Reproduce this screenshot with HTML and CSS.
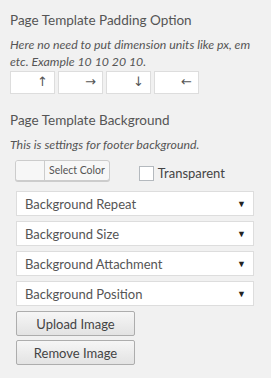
FILE: index.html
```html
<!DOCTYPE html>
<html lang="en">
<head>
    <meta charset="UTF-8">
    <meta name="viewport" content="width=device-width, initial-scale=1.0">
    <title>Page Template Options</title>
    <link rel="stylesheet" href="styles.css">
</head>
<body>
    <div class="options-panel">
        <div class="option-group">
            <h4 class="option-title">Page Template Padding Option</h4>
            <p class="option-desc">Here no need to put dimension units like px, em etc. Example 10 10 20 10.</p>
            <div class="padding-inputs">
                <label class="padding-box"><input type="text"><span class="arrow">&#8593;</span></label>
                <label class="padding-box"><input type="text"><span class="arrow">&#8594;</span></label>
                <label class="padding-box"><input type="text"><span class="arrow">&#8595;</span></label>
                <label class="padding-box"><input type="text"><span class="arrow">&#8592;</span></label>
            </div>
        </div>

        <div class="option-group">
            <h4 class="option-title">Page Template Background</h4>
            <p class="option-desc">This is settings for footer background.</p>
            <div class="bg-fields">
                <div class="color-row">
                    <button class="color-picker" type="button">
                        <span class="color-swatch"></span>
                        <span class="color-label">Select Color</span>
                    </button>
                    <label class="transparent-check">
                        <span class="check-box"></span>
                        Transparent
                    </label>
                </div>
                <div class="select-field"><span>Background Repeat</span><span class="caret">&#9660;</span></div>
                <div class="select-field"><span>Background Size</span><span class="caret">&#9660;</span></div>
                <div class="select-field"><span>Background Attachment</span><span class="caret">&#9660;</span></div>
                <div class="select-field"><span>Background Position</span><span class="caret">&#9660;</span></div>
                <button class="image-button" type="button">Upload Image</button>
                <button class="image-button" type="button">Remove Image</button>
            </div>
        </div>
    </div>
</body>
</html>
```

FILE: styles.css
```css
body {
    margin: 0;
    background-color: #f1f1f1;
    font-family: 'Lato', 'Open Sans', sans-serif;
    color: #555;
}

.options-panel {
    padding: 10px 10px 10px 10px;
}

.option-group {
    margin-bottom: 16px;
}

.option-title {
    font-size: 13.5px;
    font-weight: 400;
    line-height: 20px;
    margin: 0 0 6px 0;
    color: #555;
}

.option-desc {
    font-size: 12.3px;
    font-style: italic;
    line-height: 17px;
    margin: 0 0 1px 0;
    color: #555;
}

.padding-inputs {
    display: flex;
    gap: 3px;
}

.padding-box {
    position: relative;
    display: block;
    width: 45px;
    height: 23px;
}

.padding-box input {
    box-sizing: border-box;
    width: 100%;
    height: 100%;
    margin: 0;
    border: 1px solid #ddd;
    background: #fff;
    padding: 0;
}

.padding-box .arrow {
    position: absolute;
    right: 7px;
    top: 2px;
    font-family: 'DejaVu Sans', sans-serif;
    font-size: 13px;
    line-height: 18px;
    color: #555;
}

.bg-fields {
    padding-left: 6px;
    display: flex;
    flex-direction: column;
    align-items: flex-start;
}

.color-row {
    display: flex;
    align-items: flex-end;
    gap: 29px;
    margin: 6px 0 10px -1px;
}

.color-picker {
    display: flex;
    height: 21px;
    padding: 0;
    border: 1px solid #ccc;
    border-radius: 3px;
    background: #f7f7f7;
    box-shadow: 0 1px 0 #ccc;
    font-family: inherit;
    overflow: hidden;
}

.color-swatch {
    width: 28px;
    height: 100%;
    background: #f7f7f7;
    border-right: 1px solid #ccc;
}

.color-label {
    padding: 0 4px 0 4px;
    font-size: 10.5px;
    line-height: 19px;
    color: #555;
}

.transparent-check {
    display: flex;
    align-items: center;
    gap: 4px;
    font-size: 13px;
    color: #444;
}

.check-box {
    box-sizing: border-box;
    width: 15px;
    height: 15px;
    border: 1px solid #b4b9be;
    background: #fff;
}

.select-field {
    box-sizing: border-box;
    display: flex;
    justify-content: space-between;
    align-items: center;
    width: 238px;
    height: 25px;
    margin-bottom: 5px;
    padding: 0 7px 0 8px;
    background: #fff;
    border: 1px solid #ddd;
    font-size: 13px;
    color: #555;
}

.select-field .caret {
    font-size: 9px;
    color: #222;
}

.image-button {
    box-sizing: border-box;
    width: 119px;
    height: 25px;
    margin: 0 0 4px 0;
    border: 1px solid #adadad;
    border-radius: 2px;
    background: linear-gradient(to bottom, #f6f6f6, #e3e3e3);
    font-family: inherit;
    font-size: 13px;
    font-weight: 400;
    color: #444;
    padding: 0;
}
```
